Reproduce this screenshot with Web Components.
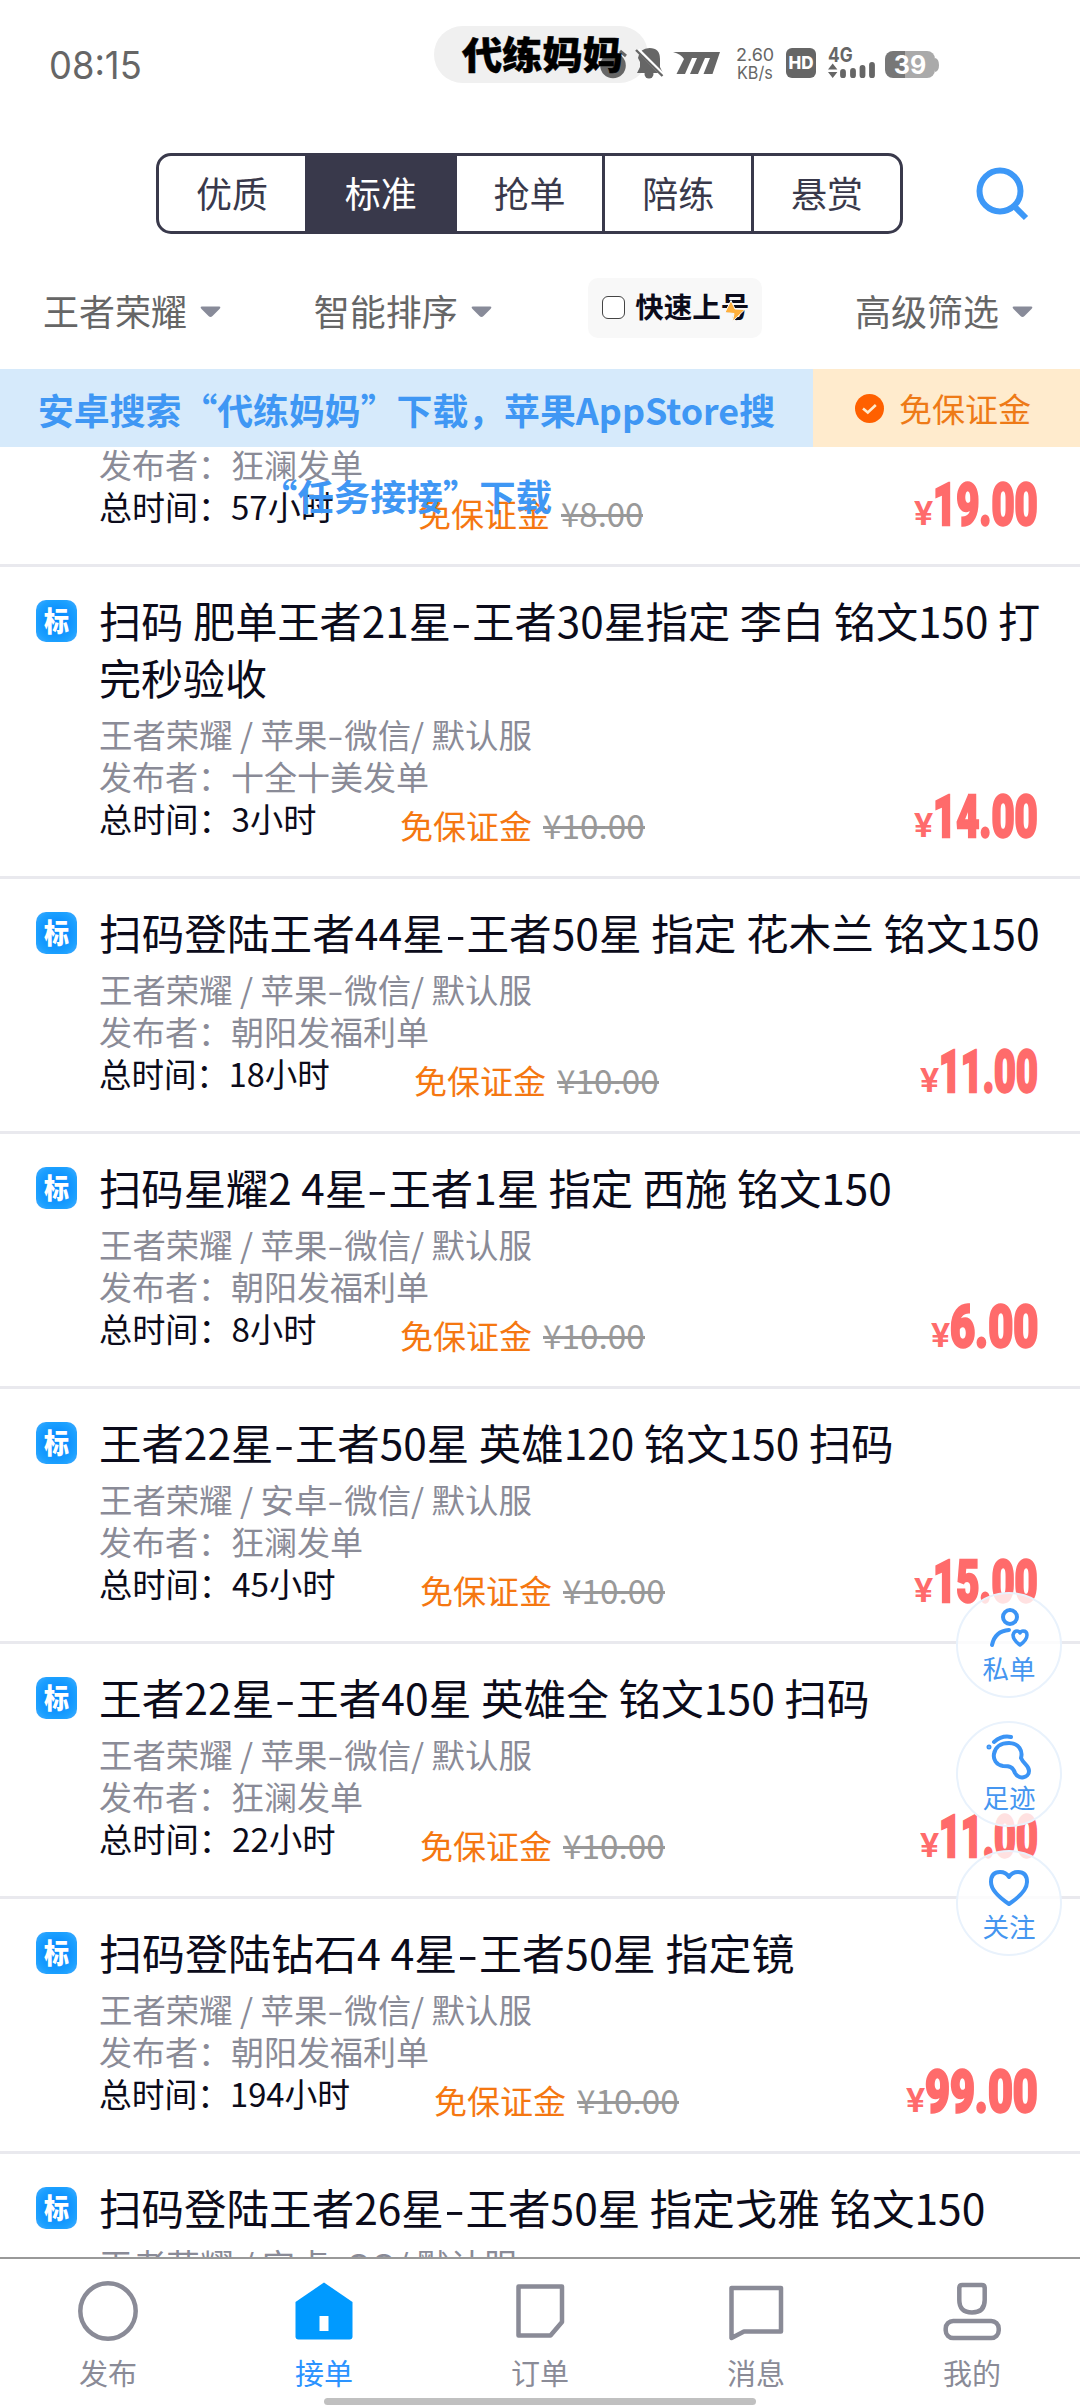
<!DOCTYPE html>
<html lang="zh-CN">
<head>
<meta charset="utf-8">
<title>代练妈妈</title>
<style>
html,body{margin:0;padding:0}
body{width:1080px;height:2408px;overflow:hidden;background:#fff;font-family:"Noto Sans CJK SC",sans-serif;color:#0b0b1a}
</style>
</head>
<body>
<order-app></order-app>
<script>
const define=(name,html,after)=>{
  const t=document.createElement('template');t.innerHTML=html;
  customElements.define(name,class extends HTMLElement{
    constructor(){super();this.attachShadow({mode:'open'}).appendChild(t.content.cloneNode(true));}
    connectedCallback(){if(after)after(this,this.shadowRoot);}
  });
};

/* One line of text, condensed or widened to a given width */
define('fit-text',`<style>:host{display:inline-block;white-space:nowrap;flex:none}span{display:inline-block;transform-origin:0 50%;white-space:pre}</style><span><slot></slot></span>`,(el,r)=>{
  const w=+el.getAttribute('w'),s=r.querySelector('span');
  el.style.width=w+'px';
  const n=s.offsetWidth;
  if(n)s.style.transform='scaleX('+w/n+')';
});

define('status-bar',`<style>
:host{display:block;height:153px;position:relative;color:#666;font-family:Inter,sans-serif}
.row{display:flex;align-items:center;height:131px;padding-left:49px}
.time{font-size:37.5px;line-height:40px}
.pill{position:absolute;left:434px;top:26px;width:214px;height:57px;border-radius:29px;background:#f0f0f0}
.brand{position:absolute;left:462px;top:28px;font:900 38px/50px "Noto Sans CJK SC",sans-serif;color:#000;-webkit-text-stroke:.5px #000}
svg{position:absolute;left:590px;top:40px}
.net{position:absolute;left:734px;top:46px;font-size:17.5px;line-height:17.500px;display:flex;flex-direction:column;align-items:center;width:41px}
.hd{position:absolute;left:786px;top:48px;width:30px;height:30px;border-radius:6px;background:#666;color:#fff;font:800 17px/30px Inter,sans-serif;text-align:center}
.g{position:absolute;left:828px;top:45px;font:700 20px/21px Inter,sans-serif}
.bat{position:absolute;left:885px;top:51px;width:50px;height:27px;border-radius:8px;background:linear-gradient(90deg,#777 40%,#aaa 40%);color:#fff;font:700 25px/28px Inter,sans-serif;text-align:center}
</style>
<div class="row"><fit-text class="time" w="93">08:15</fit-text></div>
<div class="pill"></div>
<svg width="355" height="45" viewBox="590 40 355 45"><circle cx="613" cy="65.500" r="12.800" fill="#666"/><path d="M620 51l6 5" stroke="#666" stroke-width="3"/>
<path d="M638 58q2-10 11.500-10 10.500 0 10.500 11v8l3 6h-26l3-6v-5z" fill="#666"/><circle cx="649" cy="74" r="4.500" fill="#666"/><path d="M638 50l26 26" stroke="#fff" stroke-width="4"/><path d="M636 50l26.500 26" stroke="#666" stroke-width="2.400"/>
<path d="M673 52h47l-7.500 22h-9l6.500-16h-5l-7 16h-8l7-16h-5l-7 16h-8.500l7.500-15q-3-5-11-7z" fill="#666"/>
<path d="M828 69.500l4.700-6 4.700 6zM828 72l4.700 6 4.700-6z" fill="#666"/>
<path d="M843 72v3.200M853 71v4.200M862.500 68v7.200M872 65v10.200" stroke="#666" stroke-width="5.800" stroke-linecap="round"/>
<path d="M935 58q4 1 4 7t-4 7z" fill="#aaa"/></svg>
<fit-text class="brand" w="161">代练妈妈</fit-text>
<div class="net"><fit-text w="38">2.60</fit-text><fit-text w="36">KB/s</fit-text></div>
<div class="hd"><fit-text w="25">HD</fit-text></div><fit-text class="g" w="25">4G</fit-text><div class="bat">39</div>`);

define('mode-tabs',`<style>
:host{display:flex;height:81px;padding:0 51px 0 156px;align-items:center;justify-content:space-between}
.tabs{display:flex;width:747px;height:81px;box-sizing:border-box;border:3px solid #39394b;border-radius:15px;overflow:hidden}
.tabs span{flex:1;display:flex;align-items:center;justify-content:center;font-size:36px;line-height:50px;color:#39394b;border-left:3px solid #39394b;padding-bottom:4px}
.tabs span:first-of-type{border-left:0}
.tabs .on{background:#39394b;color:#fff}
svg{display:block}
</style><div class="tabs"><span>优质</span><span class="on">标准</span><span>抢单</span><span>陪练</span><span>悬赏</span></div>
<svg width="54" height="54" viewBox="976 166 54 54" fill="none" stroke="#3d98f7" stroke-width="6"><circle cx="1001" cy="190" r="20.500"/><path d="M1014.500 204.500L1027 217"/></svg>`);

define('drop-label',`<style>:host{display:flex;align-items:center;gap:13px;font-size:36px;line-height:50px;color:#666}svg{display:block;margin-top:3px}</style><span><slot></slot></span><svg width="21" height="12" viewBox="0 0 21 12"><path d="M2 .500h17q2.500 0 .5 2.500l-7 7q-2 2-4 0l-7-7Q-.5.500 2 .500z" fill="#888b99"/></svg>`);

define('filter-bar',`<style>
:host{display:flex;height:135px;align-items:center;padding:17px 47px 0 43px;justify-content:space-between;box-sizing:border-box}
.quick{display:flex;align-items:center;box-sizing:border-box;width:174px;height:60px;border-radius:10px;background:#f8f8f8;padding-left:14px;gap:10px;position:relative;margin:-5px 0 0 4px}
.quick i{box-sizing:border-box;width:23px;height:23px;border:1.500px solid #444;border-radius:6px;background:#fff}
.quick b{font-size:28.5px;line-height:40px;margin-top:-3px}
svg{position:absolute;left:136px;top:22px}
</style><drop-label>王者荣耀</drop-label><drop-label>智能排序</drop-label>
<div class="quick"><i></i><b>快速上号</b><svg width="22" height="22" viewBox="0 0 22 22"><path d="M7 .500L1 12.500l9 1L8.500 21.500 21 9.500l-10-.5z" fill="#ffb03c" stroke="#f8f8f8" stroke-width="1"/></svg></div>
<drop-label>高级筛选</drop-label>`);

define('notice-bar',`<style>
:host{display:flex;height:78px;position:relative;z-index:2}
.l{width:813px;height:78px;background:#d6eafb;display:flex;flex-direction:column;align-items:center;font-weight:700;font-size:36px;line-height:86px;color:#3f97f4;white-space:nowrap}
.l fit-text{margin-top:-3px;margin-bottom:3px}
.r{flex:1;background:#ffebcd;display:flex;align-items:center;padding-left:42px;gap:15px;font-size:33px;color:#ee7a17}
</style><div class="l"><fit-text w="737">安卓搜索“代练妈妈”下载，苹果AppStore搜</fit-text><fit-text w="291">“任务接接”下载</fit-text></div>
<div class="r"><svg width="29" height="29" viewBox="0 0 29 29"><circle cx="14.500" cy="14.500" r="14.500" fill="#ff6000"/><path d="M8 14.500l4.800 4 8-7.500" fill="none" stroke="#ffebcd" stroke-width="2.600"/></svg><span>免保证金</span></div>`);

define('order-badge',`<style>:host{display:flex;align-items:center;justify-content:center;width:41px;height:42px;border-radius:10px;background:radial-gradient(#0a8dff 30%,#1ba0ff 70%,#4aacff);color:#fff;font-weight:900;font-size:28px;line-height:38px}fit-text{margin-top:-2px}</style><fit-text w="25">标</fit-text>`);

define('order-row',`<style>
:host{display:flex;box-sizing:border-box;border-bottom:3px solid #e9e9ee;padding:24px 40px 0 36px;flex:none;position:relative}
order-badge{margin-top:9px;flex:none}
.c{margin-left:22px;flex:1;display:flex;flex-direction:column;min-width:0;padding-bottom:37px}
.t{display:flex;flex-direction:column;font-size:42px;line-height:57px;margin-bottom:8px}
.w{display:inline-block;transform:scaleX(1.4);margin:0 .08em}
.m{font-size:33px;line-height:42px;color:#8a8b97;display:flex;flex-direction:column}
.m>div{height:42px}
.b{display:flex;color:#0b0b1a}
.d{display:flex;gap:11px;margin-left:84px;color:#f57711;position:relative;top:7px}
s{color:#999;text-decoration:none;display:flex;position:relative}
s::after{content:"";position:absolute;left:0;right:0;top:22px;height:3px;background:#999}
.p{margin:-1px 2px 0 auto;height:42px;display:flex;align-items:baseline;color:#ff6b6b}
.y{font:600 34px/42px Roboto,sans-serif}
.n{font:900 59px/42px Roboto,sans-serif;-webkit-text-stroke:2.500px #ff6b6b}
</style><order-badge></order-badge><div class="c"><div class="t"></div><div class="m"><div class="g"></div><div class="u"></div><div class="b"><div class="h"></div><div class="d"><span>免保证金</span><s></s></div><div class="p"></div></div></div></div>`,(el,r)=>{
  const d=ORDERS[+el.getAttribute('index')],q=s=>r.querySelector(s);
  const fit=(t,w,c='')=>`<fit-text class="${c}" w="${w}">${t}</fit-text>`;
  const wide=t=>t.replace('-','<span class="w">-</span>');
  q('.t').innerHTML=d.title.map(x=>fit(wide(x[0]),x[1])).join('');
  q('.g').innerHTML=fit(wide(d.meta[0]),d.meta[1]);
  q('.u').textContent='发布者：'+d.user;
  q('.h').innerHTML=fit('总时间：'+d.time[0]+'小时',d.time[1]-99);
  q('s').innerHTML=fit(d.dep[0],d.dep[1]);
  q('.p').innerHTML=fit('¥',19,'y')+fit(d.price[0],d.price[1],'n');
});

const APPLE=['王者荣耀 / 苹果-微信/ 默认服',433],ANDROID=['王者荣耀 / 安卓-微信/ 默认服',433],TEN=['¥10.00',102];
const ORDERS=[
 {title:[['王者22星-王者50星 扫码',470]],meta:ANDROID,user:'狂澜发单',time:['57',334],dep:['¥8.00',82],price:['19.00',105]},
 {title:[['扫码 肥单王者21星-王者30星指定 李白 铭文150 打',941],['完秒验收',168]],meta:APPLE,user:'十全十美发单',time:['3',316],dep:TEN,price:['14.00',105]},
 {title:[['扫码登陆王者44星-王者50星 指定 花木兰 铭文150',941]],meta:APPLE,user:'朝阳发福利单',time:['18',330],dep:TEN,price:['11.00',99]},
 {title:[['扫码星耀2 4星-王者1星 指定 西施 铭文150',793]],meta:APPLE,user:'朝阳发福利单',time:['8',316],dep:TEN,price:['6.00',88]},
 {title:[['王者22星-王者50星 英雄120 铭文150 扫码',795]],meta:ANDROID,user:'狂澜发单',time:['45',336],dep:TEN,price:['15.00',105]},
 {title:[['王者22星-王者40星 英雄全 铭文150 扫码',771]],meta:APPLE,user:'狂澜发单',time:['22',336],dep:TEN,price:['11.00',99]},
 {title:[['扫码登陆钻石4 4星-王者50星 指定镜',695]],meta:APPLE,user:'朝阳发福利单',time:['194',350],dep:TEN,price:['99.00',113]},
 {title:[['扫码登陆王者26星-王者50星 指定戈雅 铭文150',886]],meta:['王者荣耀 / 安卓-QQ/ 默认服',418],user:'朝阳发福利单',time:['20',336],dep:TEN,price:['20.00',110]}
];

define('order-list',`<style>:host{display:flex;flex-direction:column;height:1810px;overflow:hidden}order-row:first-of-type{margin-top:-135px}</style>`+ORDERS.map((o,i)=>`<order-row index="${i}"></order-row>`).join(''));

define('float-button',`<style>:host{display:flex;flex-direction:column;align-items:center;box-sizing:border-box;width:106px;height:106px;border-radius:50%;border:2px solid #e9f2fc;background:rgba(255,255,255,.8);color:#4596f0;font-size:26.5px;line-height:32px;padding-top:10px}</style><slot name="icon"></slot><span><slot></slot></span>`);

define('float-menu',`<style>:host{position:absolute;left:956px;top:1592px;display:flex;flex-direction:column;gap:23px;z-index:3}svg{display:block;fill:none;stroke:#3b94f5;stroke-width:4;stroke-linecap:round;stroke-linejoin:round}</style>
<float-button><svg slot="icon" width="48" height="48" viewBox="0 0 48 48"><circle cx="25" cy="13" r="7"/><path d="M7 41q3-14 17-15"/><path d="M35 41q-7-5-7-10 1-4 4-4 2 0 3 2 1-2 3-2 4 0 4 4 0 5-7 10z" stroke-width="3.500"/></svg>私单</float-button>
<float-button><svg slot="icon" width="48" height="48" viewBox="0 0 48 48"><path d="M24 10c10 0 14 8 12 15 3 7 8 7 8 13 0 7-10 9-14 2-2-6-5-7-12-7-7-1-10-7-9-12 1-7 7-11 15-11z"/><path d="M9 9Q17 2 26 4"/><circle cx="4" cy="14" r="1" stroke-width="3"/></svg>足迹</float-button>
<float-button><svg slot="icon" width="48" height="48" viewBox="0 -1 48 48"><path d="M24 41Q6 29 6 19q0-10 9-10 6 0 9 5 3-5 9-5 9 0 9 10 0 10-18 22z"/></svg>关注</float-button>`);

define('tab-item',`<style>:host{flex:1;display:flex;flex-direction:column;align-items:center;color:#8a8b97;font-size:29px;line-height:40px;gap:11px}:host([active]){color:#2b93ff}</style><slot name="icon"></slot><span><slot></slot></span>`);

define('tab-bar',`<style>:host{display:block;height:151px;position:relative;border-top:2px solid #999;background:#fff;box-sizing:border-box}
.r{display:flex;padding-top:22px;height:112px}svg{display:block;fill:none;stroke:#8a8b97;stroke-width:4.500;stroke-linejoin:round}
.h{width:432px;height:7px;border-radius:4px;background:#c0c0c0;margin:5px auto 0}</style>
<div class="r">
<tab-item><svg slot="icon" width="60" height="60"><circle cx="30" cy="30" r="27.700"/></svg>发布</tab-item>
<tab-item active><svg slot="icon" width="60" height="60"><path d="M30 1.500L58.500 21v34.500a3 3 0 0 1-3 3H4.500a3 3 0 0 1-3-3V21z" fill="#009aff" stroke="none"/><path d="M25.500 35h9v15h-9z" fill="#fff" stroke="none"/></svg>接单</tab-item>
<tab-item><svg slot="icon" width="60" height="60"><path d="M8.500 5.500h43.500V41L40.500 54.500H8.500z"/></svg>订单</tab-item>
<tab-item><svg slot="icon" width="60" height="60"><path d="M5.500 7h49.500v43.500H18L5.500 57z"/></svg>消息</tab-item>
<tab-item><svg slot="icon" width="60" height="60"><path d="M17.300 7q0-3 3-3h19.400q3 0 3 3v12q0 12.500-12.700 12.500T17.300 19z"/><rect x="3.700" y="40" width="53" height="17" rx="7.500"/></svg>我的</tab-item>
</div><div class="h"></div>`);

define('order-app',`<style>:host{display:flex;flex-direction:column;width:1080px;height:2408px;position:relative;background:#fff;overflow:hidden}status-bar,mode-tabs,filter-bar,notice-bar,order-list,tab-bar{flex:none}</style>
<status-bar></status-bar><mode-tabs></mode-tabs><filter-bar></filter-bar><notice-bar></notice-bar><order-list></order-list><tab-bar></tab-bar><float-menu></float-menu>`);
</script>
</body>
</html>
